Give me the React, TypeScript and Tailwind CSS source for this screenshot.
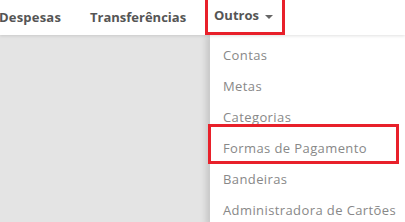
const menu = ['Contas', 'Metas', 'Categorias', 'Formas de Pagamento', 'Bandeiras', 'Administradora de Cartões']

export default function App() {
  return (
    <div
      className="relative flex h-[222px] w-[405px] flex-col overflow-hidden bg-[#e4e4e4]"
      style={{ fontFamily: '"Open Sans", "Liberation Sans", sans-serif' }}
    >
      <header className="relative z-10 flex h-[35px] shrink-0 items-center bg-white text-[13px] font-bold text-[#555] shadow-[0_1px_3px_rgba(0,0,0,0.12)]">
        <span className="ml-[-1px] w-[91px] tracking-[0.2px]">Despesas</span>
        <span className="w-[115px]">Transferências</span>
        <div className="flex h-full w-[80px] items-center gap-[6px] border-[3px] border-t-0 border-[#e8202a] pl-[6px]">
          Outros
          <span className="mt-[2px] h-0 w-0 border-x-[4px] border-t-[4px] border-x-transparent border-t-[#666]" />
        </div>
      </header>
      <div className="flex flex-1">
        <div className="w-[210px] shrink-0" />
        <ul className="flex-1 bg-white pt-[5px] text-[13px] tracking-[0.4px] text-[#888] shadow-[-4px_0_6px_rgba(0,0,0,0.13)]">
          {menu.map((m) => (
            <li key={m} className="flex h-[31px] items-center pl-[13px] whitespace-nowrap">
              {m}
            </li>
          ))}
        </ul>
      </div>
      <div className="absolute left-[208px] top-[124px] h-[40px] w-[191px] border-[3px] border-[#e8202a]" />
    </div>
  )
}
